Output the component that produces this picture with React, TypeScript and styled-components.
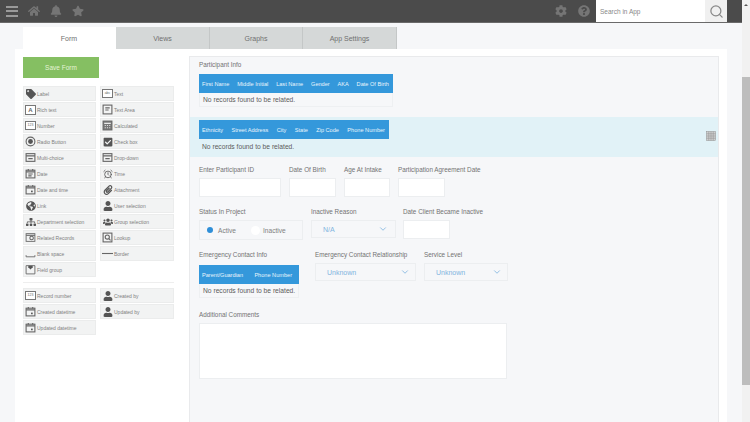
import React from 'react';
import styled, { createGlobalStyle } from 'styled-components';
import {
  FaHome, FaBell, FaStar, FaCog, FaQuestionCircle, FaTag, FaCheckSquare, FaPaperclip,
  FaGlobeAmericas, FaUser, FaSitemap, FaUsers,
} from 'react-icons/fa';
import { FiSearch, FiChevronDown } from 'react-icons/fi';
import { LuAlarmClock } from 'react-icons/lu';

const GlobalStyle = createGlobalStyle`
  html, body {
    margin: 0;
    height: 100%;
    overflow: hidden;
    background: #f6f7f9;
    font-family: "Liberation Sans", Arial, sans-serif;
    color: #666;
  }
`;

const Screen = styled.div`
  display: flex;
  width: 750px;
  height: 422px;
  overflow: hidden;
`;

const Page = styled.div`
  flex: 1;
  min-width: 0;
  display: flex;
  flex-direction: column;
`;

const Scrollbar = styled.div`
  width: 8px;
  background: #f1f1f1;
  padding-top: 77px;
  position: relative;
  &::before {
    content: '';
    position: absolute;
    top: 4px;
    left: 2px;
    border: 2px solid transparent;
    border-top: 0;
    border-bottom: 2px solid #555;
  }
`;

const ScrollThumb = styled.div`
  height: 308px;
  background: #bdbdbd;
`;

const TopBar = styled.header`
  height: 22px;
  background: #4b4b4b;
  border-bottom: 1px solid #6a6a6a;
  display: flex;
  align-items: center;
  padding-left: 6px;
  color: #757575;
  flex: none;
`;

const Burger = styled.div`
  width: 12px;
  height: 11px;
  margin-right: 10px;
  display: flex;
  flex-direction: column;
  justify-content: space-between;
  span {
    display: block;
    height: 2px;
    background: #9a9a9a;
  }
`;

const NavIcons = styled.div`
  display: flex;
  align-items: center;
  gap: 10px;
  font-size: 12px;
  svg {
    display: block;
  }
`;

const Spacer = styled.div`
  flex: 1;
`;

const ToolIcons = styled(NavIcons)`
  gap: 11px;
  margin-right: 6px;
`;

const SearchBox = styled.div`
  width: 109px;
  height: 22px;
  background: #fff;
  font-size: 6.5px;
  color: #888;
  display: flex;
  align-items: center;
  padding-left: 4px;
  box-sizing: border-box;
`;

const SearchButton = styled.div`
  width: 22px;
  height: 22px;
  margin-right: 15px;
  background: #f0f0f0;
  color: #888;
  font-size: 15px;
  display: flex;
  align-items: center;
  justify-content: center;
`;

const Tabs = styled.nav`
  display: flex;
  margin: 4px 0 0 23px;
  flex: none;
`;

const Tab = styled.div<{ $active?: boolean; $w: number }>`
  width: ${(p) => p.$w}px;
  height: 22px;
  background: ${(p) => (p.$active ? '#fff' : '#d5d8d8')};
  border-right: 1px solid ${(p) => (p.$active ? '#fff' : '#c4c7c7')};
  box-sizing: border-box;
  font-size: 7px;
  color: #707070;
  display: flex;
  align-items: center;
  justify-content: center;
`;

const Card = styled.main`
  flex: 1;
  min-height: 0;
  margin: 0 15px;
  background: #fff;
  padding: 7px 8px 0;
  display: flex;
  gap: 15px;
  overflow: hidden;
`;

const Sidebar = styled.aside`
  width: 151px;
  flex: none;
`;

const SaveButton = styled.div`
  width: 76px;
  height: 21px;
  margin-top: 1px;
  background: #85bf62;
  color: #e4f3d6;
  font-size: 6.5px;
  display: flex;
  align-items: center;
  justify-content: center;
`;

const Palette = styled.div`
  display: grid;
  grid-template-columns: 73px 74px;
  column-gap: 4px;
  row-gap: 1px;
  margin-top: 8px;
`;

const Divider = styled.div`
  width: 151px;
  height: 1px;
  background: #eee;
  margin-top: 5px;
  & + ${Palette} {
    margin-top: 5px;
  }
`;

const Item = styled.div`
  height: 15px;
  background: #f2f3f3;
  border: 1px solid #ebecec;
  box-sizing: border-box;
  display: flex;
  align-items: center;
  padding-left: 1px;
  font-size: 5px;
  color: #808080;
  white-space: nowrap;
  position: relative;
`;

const ItemIcon = styled.span`
  width: 11px;
  height: 11px;
  margin-right: 1px;
  color: #555;
  font-size: 10px;
  display: flex;
  align-items: center;
  justify-content: center;
  flex: none;
`;

const BoxGlyph = styled.span`
  width: 9px;
  height: 7px;
  border: 1px solid #777;
  font-size: 3.5px;
  line-height: 7px;
  text-align: center;
  color: #666;
  background: #fff;
`;

const LetterGlyph = styled(BoxGlyph)`
  height: 8px;
  line-height: 8px;
  font-size: 6px;
  font-weight: bold;
`;

const Grip = styled.span`
  position: absolute;
  right: 2px;
  top: 2px;
  bottom: 2px;
  width: 4px;
  background-image: radial-gradient(#d9dada 0.6px, transparent 0.7px);
  background-size: 2px 2px;
`;

const FormPanel = styled.section`
  flex: 1;
  min-width: 0;
  background: #f6f7f9;
  border: 1px solid #e9eaec;
  border-bottom: 0;
  padding-top: 4px;
`;

const Row = styled.div<{ $top?: number }>`
  display: flex;
  align-items: flex-start;
  padding: 0 9px;
  margin-top: ${(p) => p.$top ?? 0}px;
`;

const Field = styled.div<{ $right?: number }>`
  display: flex;
  flex-direction: column;
  margin-right: ${(p) => p.$right ?? 8}px;
`;

const Label = styled.div`
  font-size: 6.35px;
  line-height: 8px;
  height: 8px;
  margin: 0 0 4px;
  color: #737373;
  white-space: nowrap;
`;

const TextInput = styled.div<{ $w: number }>`
  width: ${(p) => p.$w}px;
  height: 19px;
  background: #fff;
  border: 1px solid #eceef0;
  box-sizing: border-box;
`;

const Comments = styled(TextInput)`
  height: 56px;
`;

const Select = styled.div<{ $w: number; $h: number; $arrowGap?: number }>`
  width: ${(p) => p.$w}px;
  height: ${(p) => p.$h}px;
  border: 1px solid #eceef0;
  box-sizing: border-box;
  display: flex;
  align-items: center;
  justify-content: space-between;
  padding: 0 ${(p) => p.$arrowGap ?? 5}px 0 11px;
  font-size: 7px;
  color: #7fb4e0;
  svg {
    color: #7fb4e0;
    font-size: 10px;
  }
`;

const RadioBox = styled.div`
  width: 104px;
  height: 20px;
  border: 1px solid #eceef0;
  box-sizing: border-box;
  display: flex;
  align-items: center;
  padding-left: 7px;
  font-size: 6.6px;
  color: #808080;
`;

const Radio = styled.span<{ $on?: boolean }>`
  width: ${(p) => (p.$on ? 6 : 9)}px;
  height: ${(p) => (p.$on ? 6 : 9)}px;
  border-radius: 50%;
  background: ${(p) => (p.$on ? '#2f8fd8' : '#fff')};
  margin-right: ${(p) => (p.$on ? 5 : 3)}px;
  margin-left: ${(p) => (p.$on ? 0 : 15)}px;
`;

const Table = styled.div<{ $w: number }>`
  width: ${(p) => p.$w}px;
`;

const TableHead = styled.div<{ $endGap?: number }>`
  height: 19px;
  background: #3498db;
  color: #e9f5fc;
  font-size: 5.6px;
  display: flex;
  align-items: center;
  justify-content: space-between;
  padding: 0 ${(p) => p.$endGap ?? 4}px 0 3px;
  white-space: nowrap;
`;

const TableBody = styled.div`
  height: 14px;
  border: 1px solid #eef0f2;
  border-top: 0;
  box-sizing: border-box;
  font-size: 6.7px;
  line-height: 13px;
  padding-left: 3px;
  color: #5c5c5c;
  white-space: nowrap;
`;

const Band = styled.div`
  margin-top: 10px;
  height: 40px;
  background: #e1f2f7;
  padding: 3px 9px 0;
  box-sizing: border-box;
  position: relative;
`;

const BandBody = styled(TableBody)`
  border: 0;
  height: 15px;
  line-height: 15px;
`;

const BandGrid = styled.svg`
  position: absolute;
  right: 2px;
  top: 14px;
  width: 10px;
  height: 10px;
`;

const HeaderLabel = styled(Label)`
  margin-bottom: 5px;
`;

const EmergencyLabel = styled(Label)`
  margin-bottom: 6px;
`;

const left = [
  ['Label', 'tag'], ['Rich text', 'rich'], ['Number', 'num'], ['Radio Button', 'radio'],
  ['Multi-choice', 'list'], ['Date', 'date'], ['Date and time', 'cal'], ['Link', 'globe'],
  ['Department selection', 'org'], ['Related Records', 'rel'], ['Blank space', 'blank'], ['Field group', 'group'],
];
const right = [
  ['Text', 'abc'], ['Text Area', 'area'], ['Calculated', 'calc'], ['Check box', 'check'],
  ['Drop-down', 'list'], ['Time', 'time'], ['Attachment', 'clip'], ['User selection', 'user'],
  ['Group selection', 'users'], ['Lookup', 'look'], ['Border', 'border'],
];
const systemItems = [
  ['Record number', 'num'], ['Created by', 'user'], ['Created datetime', 'cal'],
  ['Updated by', 'user'], ['Updated datetime', 'cal'],
];

function Sketch({ children }: { children: React.ReactNode }) {
  return (
    <svg width="11" height="11" viewBox="0 0 10 10" fill="none" stroke="#666" strokeWidth="1">
      {children}
    </svg>
  );
}

function PaletteIcon({ name }: { name: string }) {
  switch (name) {
    case 'tag': return <FaTag />;
    case 'abc': return <BoxGlyph>abc</BoxGlyph>;
    case 'num': return <BoxGlyph>123</BoxGlyph>;
    case 'rich': return <LetterGlyph>A</LetterGlyph>;
    case 'check': return <FaCheckSquare />;
    case 'clip': return <FaPaperclip />;
    case 'globe': return <FaGlobeAmericas />;
    case 'user': return <FaUser />;
    case 'org': return <FaSitemap />;
    case 'users': return <FaUsers />;
    case 'time': return <LuAlarmClock />;
    case 'area':
      return <Sketch><rect x="1" y="1" width="8" height="8" /><path d="M3 3.5h4M3 5.5h3" /></Sketch>;
    case 'calc':
      return <Sketch><rect x="1" y="1" width="8" height="8" fill="#777" /><path d="M2 3h6" stroke="#fff" /><path d="M2.5 5h5M2.5 7h5" stroke="#ddd" strokeDasharray="1 1" /></Sketch>;
    case 'radio':
      return <Sketch><circle cx="5" cy="5" r="4" /><circle cx="5" cy="5" r="2.2" fill="#555" stroke="none" /></Sketch>;
    case 'list':
      return <Sketch><rect x="1" y="1.5" width="8" height="7" /><path d="M1 3.5h8M3 6h4" /></Sketch>;
    case 'date':
      return <Sketch><rect x="1" y="2" width="8" height="7" /><path d="M1 3.5h8M3 1v1.5M7 1v1.5M3 5.5h4M3 7.2h3" /></Sketch>;
    case 'cal':
      return <Sketch><rect x="1" y="2" width="8" height="7" /><path d="M1 3.5h8M3 1v1.5M7 1v1.5" /><rect x="5.5" y="6" width="1.5" height="1.5" fill="#555" stroke="none" /></Sketch>;
    case 'rel':
      return <Sketch><rect x="1" y="1.5" width="8" height="7" strokeWidth=".8" /><circle cx="6" cy="5.5" r="1.6" /><path d="M1 3h8" /></Sketch>;
    case 'look':
      return <Sketch><rect x="1" y="1" width="8" height="8" /><circle cx="4.8" cy="4.6" r="1.9" /><path d="M6.2 6l1.6 1.6" /></Sketch>;
    case 'blank':
      return <Sketch><path d="M1 6.5v1.5h8V6.5" strokeWidth=".8" /></Sketch>;
    case 'border':
      return <Sketch><path d="M0 5h10" /></Sketch>;
    case 'group':
      return <Sketch><path d="M1 1.5h8v7.5H1z" strokeWidth=".8" /><path d="M3 1.5h4v1.5L5 5 3 3z" fill="#555" stroke="none" /></Sketch>;
    default: return null;
  }
}

function PaletteItem({ text, icon }: { text: string; icon: string }) {
  return (
    <Item>
      <ItemIcon><PaletteIcon name={icon} /></ItemIcon>
      {text}
      <Grip />
    </Item>
  );
}

function RelatedTable({ w, cols, endGap }: { w: number; cols: string[]; endGap?: number }) {
  return (
    <Table $w={w}>
      <TableHead $endGap={endGap}>{cols.map((c) => <span key={c}>{c}</span>)}</TableHead>
      <TableBody>No records found to be related.</TableBody>
    </Table>
  );
}

export default function App() {
  const mainItems: string[][] = [];
  left.forEach((l, i) => {
    mainItems.push(l);
    if (right[i]) mainItems.push(right[i]);
  });

  return (
    <Screen>
      <GlobalStyle />
      <Page>
        <TopBar>
          <Burger><span /><span /><span /></Burger>
          <NavIcons><FaHome /><FaBell /><FaStar /></NavIcons>
          <Spacer />
          <ToolIcons><FaCog /><FaQuestionCircle /></ToolIcons>
          <SearchBox>Search in App</SearchBox>
          <SearchButton><FiSearch /></SearchButton>
        </TopBar>
        <Tabs>
          <Tab $active $w={93}>Form</Tab>
          <Tab $w={94}>Views</Tab>
          <Tab $w={93}>Graphs</Tab>
          <Tab $w={94}>App Settings</Tab>
        </Tabs>
        <Card>
          <Sidebar>
            <SaveButton>Save Form</SaveButton>
            <Palette>
              {mainItems.map(([t, i]) => <PaletteItem key={t} text={t} icon={i} />)}
            </Palette>
            <Divider />
            <Palette>
              {systemItems.map(([t, i]) => <PaletteItem key={t} text={t} icon={i} />)}
            </Palette>
          </Sidebar>
          <FormPanel>
            <Row>
              <Field>
                <HeaderLabel>Participant Info</HeaderLabel>
                <RelatedTable w={194} cols={['First Name', 'Middle Initial', 'Last Name', 'Gender', 'AKA', 'Date Of Birth']} />
              </Field>
            </Row>
            <Band>
              <Table $w={190}>
                <TableHead>
                  {['Ethnicity', 'Street Address', 'City', 'State', 'Zip Code', 'Phone Number'].map((c) => <span key={c}>{c}</span>)}
                </TableHead>
                <BandBody>No records found to be related.</BandBody>
              </Table>
              <BandGrid viewBox="0 0 10 10" fill="#cfcfcf" stroke="#8f8f8f" strokeWidth="0.5">
                <rect x=".5" y=".5" width="9" height="9" />
                <path d="M.5 2.75h9M.5 5h9M.5 7.25h9M2.75.5v9M5 .5v9M7.25.5v9" />
              </BandGrid>
            </Band>
            <Row $top={9}>
              <Field><Label>Enter Participant ID</Label><TextInput $w={82} /></Field>
              <Field><Label>Date Of Birth</Label><TextInput $w={47} /></Field>
              <Field><Label>Age At Intake</Label><TextInput $w={46} /></Field>
              <Field><Label>Participation Agreement Date</Label><TextInput $w={47} /></Field>
            </Row>
            <Row $top={11}>
              <Field>
                <Label>Status In Project</Label>
                <RadioBox>
                  <Radio $on />Active
                  <Radio />Inactive
                </RadioBox>
              </Field>
              <Field $right={7}>
                <Label>Inactive Reason</Label>
                <Select $w={85} $h={18} $arrowGap={7}>N/A<FiChevronDown /></Select>
              </Field>
              <Field>
                <Label>Date Client Became Inactive</Label>
                <TextInput $w={47} />
              </Field>
            </Row>
            <Row $top={11}>
              <Field $right={16}>
                <EmergencyLabel>Emergency Contact Info</EmergencyLabel>
                <RelatedTable w={100} endGap={7} cols={['Parent/Guardian', 'Phone Number']} />
              </Field>
              <Field>
                <Label>Emergency Contact Relationship</Label>
                <Select $w={101} $h={18}>Unknown<FiChevronDown /></Select>
              </Field>
              <Field>
                <Label>Service Level</Label>
                <Select $w={84} $h={18}>Unknown<FiChevronDown /></Select>
              </Field>
            </Row>
            <Row $top={13}>
              <Field>
                <Label>Additional Comments</Label>
                <Comments $w={308} />
              </Field>
            </Row>
          </FormPanel>
        </Card>
      </Page>
      <Scrollbar><ScrollThumb /></Scrollbar>
    </Screen>
  );
}
